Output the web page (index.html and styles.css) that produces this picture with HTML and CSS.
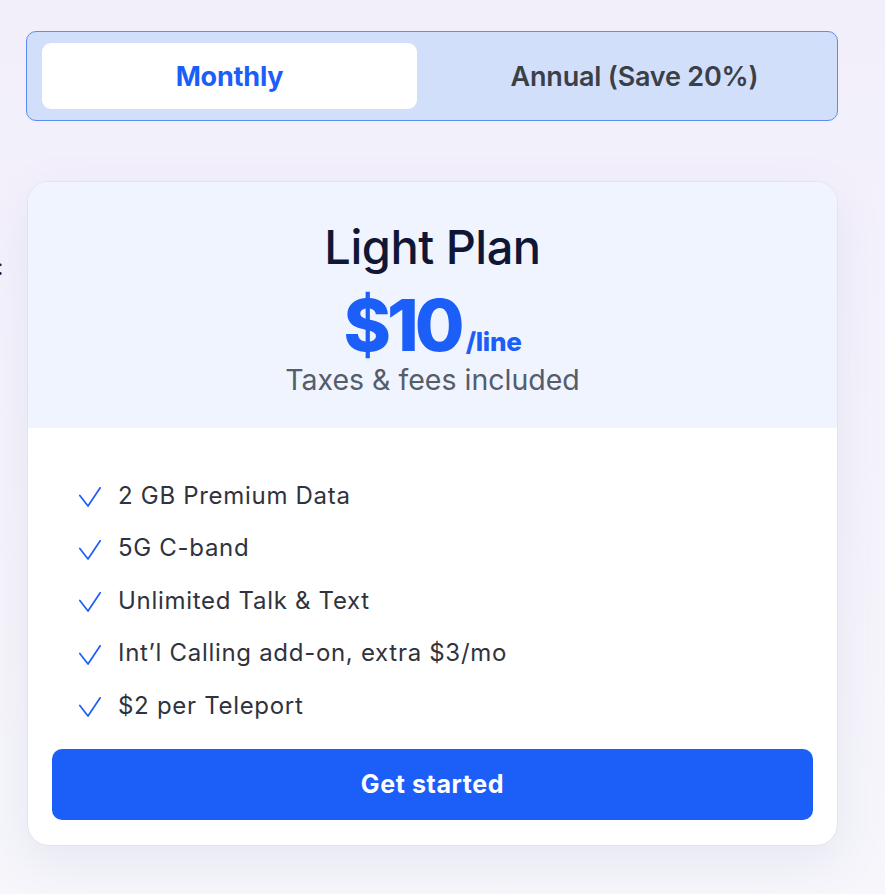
FILE: index.html
```html
<!DOCTYPE html>
<html>
<head>
<meta charset="utf-8">
<link rel="stylesheet" href="styles.css">
</head>
<body>
<div class="page">
  <span class="stray">:</span>
  <div class="toggle">
    <button class="opt active">Monthly</button>
    <button class="opt">Annual (Save 20%)</button>
  </div>
  <div class="card">
    <div class="head">
      <h1 class="title">Light Plan</h1>
      <div class="price"><span class="amt">$10</span><span class="per">/line</span></div>
      <div class="note">Taxes &amp; fees included</div>
    </div>
    <div class="body">
      <ul class="features">
        <li><svg class="check" viewBox="0 0 22 20"><path d="M0.8 8.5 L9 19 L21.2 0.8" fill="none" stroke="#1c5ef8" stroke-width="1.7" stroke-linecap="round" stroke-linejoin="round"/></svg>2 GB Premium Data</li>
        <li><svg class="check" viewBox="0 0 22 20"><path d="M0.8 8.5 L9 19 L21.2 0.8" fill="none" stroke="#1c5ef8" stroke-width="1.7" stroke-linecap="round" stroke-linejoin="round"/></svg>5G C-band</li>
        <li><svg class="check" viewBox="0 0 22 20"><path d="M0.8 8.5 L9 19 L21.2 0.8" fill="none" stroke="#1c5ef8" stroke-width="1.7" stroke-linecap="round" stroke-linejoin="round"/></svg>Unlimited Talk &amp; Text</li>
        <li><svg class="check" viewBox="0 0 22 20"><path d="M0.8 8.5 L9 19 L21.2 0.8" fill="none" stroke="#1c5ef8" stroke-width="1.7" stroke-linecap="round" stroke-linejoin="round"/></svg>Int’l Calling add-on, extra $3/mo</li>
        <li><svg class="check" viewBox="0 0 22 20"><path d="M0.8 8.5 L9 19 L21.2 0.8" fill="none" stroke="#1c5ef8" stroke-width="1.7" stroke-linecap="round" stroke-linejoin="round"/></svg>$2 per Teleport</li>
      </ul>
      <button class="cta">Get started</button>
    </div>
  </div>
</div>
</body>
</html>
```

FILE: styles.css
```css
* { box-sizing: border-box; }
html, body { margin: 0; padding: 0; }
body {
  width: 885px;
  height: 894px;
  overflow: hidden;
  font-family: "Inter", "Open Sans", sans-serif;
  background: linear-gradient(180deg, #f2effb 0%, #f4f2fb 40%, #f6f6fb 100%);
}
.page {
  position: relative;
  padding: 31px 47px 0 26px;
}
.stray {
  position: absolute;
  left: -3px;
  top: 254px;
  font-size: 22px;
  color: #222;
}
.toggle {
  display: flex;
  height: 90px;
  padding: 11px 15px;
  background: #d2dffb;
  border: 1px solid #5b8ef0;
  border-radius: 10px;
}
.opt {
  flex: 1;
  border: 0;
  background: transparent;
  font-family: inherit;
  font-size: 27px;
  font-weight: 600;
  letter-spacing: -0.2px;
  color: #3b3f48;
  border-radius: 9px;
  cursor: pointer;
  padding: 0 0 0 30px;
}
.opt.active {
  flex: 0 0 375px;
  padding: 0;
  background: #fff;
  color: #1c5ef8;
  font-weight: 700;
}
.card {
  margin-top: 60px;
  margin-left: 1px;
  background: #fff;
  border: 1px solid #e2e4ec;
  border-radius: 22px;
  overflow: hidden;
  box-shadow: 0 16px 48px rgba(120, 130, 170, 0.12);
}
.head {
  background: #eff4fe;
  height: 246px;
  display: flex;
  flex-direction: column;
  align-items: center;
  padding-top: 41px;
}
.title {
  margin: 0;
  font-size: 47px;
  font-weight: 500;
  color: #0f1636;
  line-height: 1;
  letter-spacing: -0.5px;
}
.price {
  margin-top: 19px;
  display: flex;
  align-items: baseline;
  color: #1c5ef8;
  font-weight: 800;
  line-height: 1;
}
.amt { font-size: 72px; letter-spacing: -4px; margin-right: 5px; }
.per { font-size: 26px; letter-spacing: -0.3px; }
.note {
  margin-top: 5px;
  font-size: 28.5px;
  color: #555d6b;
  line-height: 1;
}
.body {
  padding: 55px 24px 25px 24px;
}
.features {
  list-style: none;
  margin: 0;
  padding: 0 0 0 27px;
}
.features li {
  display: flex;
  align-items: center;
  height: 52.5px;
  font-size: 24px;
  letter-spacing: 0.7px;
  color: #30333d;
  margin-top: -14px;
  margin-bottom: 14px;
}
.check {
  width: 22px;
  height: 20px;
  margin-right: 17px;
  margin-top: 4px;
}
.cta {
  display: block;
  width: 100%;
  height: 71px;
  margin-top: 17px;
  border: 0;
  border-radius: 10px;
  background: #1c5ef8;
  color: #fff;
  font-family: inherit;
  font-size: 25px;
  font-weight: 700;
  letter-spacing: 0.6px;
}
```
